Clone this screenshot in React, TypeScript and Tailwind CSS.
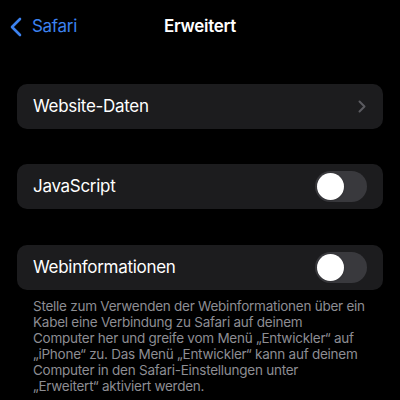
import React from "react";

function Toggle() {
  return (
    <div className="flex h-[31px] w-[52px] items-center rounded-full bg-[#39393d] p-[2px]">
      <div className="h-[27px] w-[27px] rounded-full bg-white shadow" />
    </div>
  );
}

function Row({ label, right }: { label: string; right: React.ReactNode }) {
  return (
    <div className="flex h-[45px] items-center justify-between rounded-[10px] bg-[#1c1c1e] pl-[16px] pr-[16px]">
      <span className="text-[17px] tracking-[-0.3px] text-white">{label}</span>
      {right}
    </div>
  );
}

const footer = [
  "Stelle zum Verwenden der Webinformationen über ein",
  "Kabel eine Verbindung zu Safari auf deinem",
  "Computer her und greife vom Menü „Entwickler“ auf",
  "„iPhone“ zu. Das Menü „Entwickler“ kann auf deinem",
  "Computer in den Safari-Einstellungen unter",
  "„Erweitert“ aktiviert werden.",
];

export default function App() {
  return (
    <div
      className="h-[400px] w-[400px] overflow-hidden bg-black px-[17px]"
      style={{ fontFamily: "Inter, 'Liberation Sans', sans-serif" }}
    >
      <div className="relative flex h-[50px] items-center pt-[3px]">
        <div className="flex items-center gap-[10px]">
          <svg width="12" height="20" viewBox="0 0 12 20" className="-ml-[7px]">
            <path d="M10 2 L2 10 L10 18" fill="none" stroke="#3c82f0" strokeWidth="2.6" strokeLinecap="round" strokeLinejoin="round" />
          </svg>
          <span className="text-[17px] tracking-[-0.3px] text-[#3c82f0]">Safari</span>
        </div>
        <div className="absolute inset-x-0 text-center text-[17px] font-semibold tracking-[-0.3px] text-white">Erweitert</div>
      </div>

      <div className="mt-[34px] flex flex-col">
        <Row
          label="Website-Daten"
          right={
            <svg width="8" height="13" viewBox="0 0 8 13" className="mr-[1px]">
              <path d="M1.5 1.5 L6.5 6.5 L1.5 11.5" fill="none" stroke="#5b5b60" strokeWidth="2" strokeLinecap="round" strokeLinejoin="round" />
            </svg>
          }
        />
        <div className="mt-[35px]">
          <Row label="JavaScript" right={<Toggle />} />
        </div>
        <div className="mt-[36px]">
          <Row label="Webinformationen" right={<Toggle />} />
        </div>
        <p className="mt-[8px] whitespace-nowrap pl-[16px] text-[13.5px] leading-[16px] tracking-[-0.25px] text-[#8d8d93]">
          {footer.map((l, i) => (
            <React.Fragment key={i}>
              {l}
              {i < footer.length - 1 && <br />}
            </React.Fragment>
          ))}
        </p>
      </div>
    </div>
  );
}
